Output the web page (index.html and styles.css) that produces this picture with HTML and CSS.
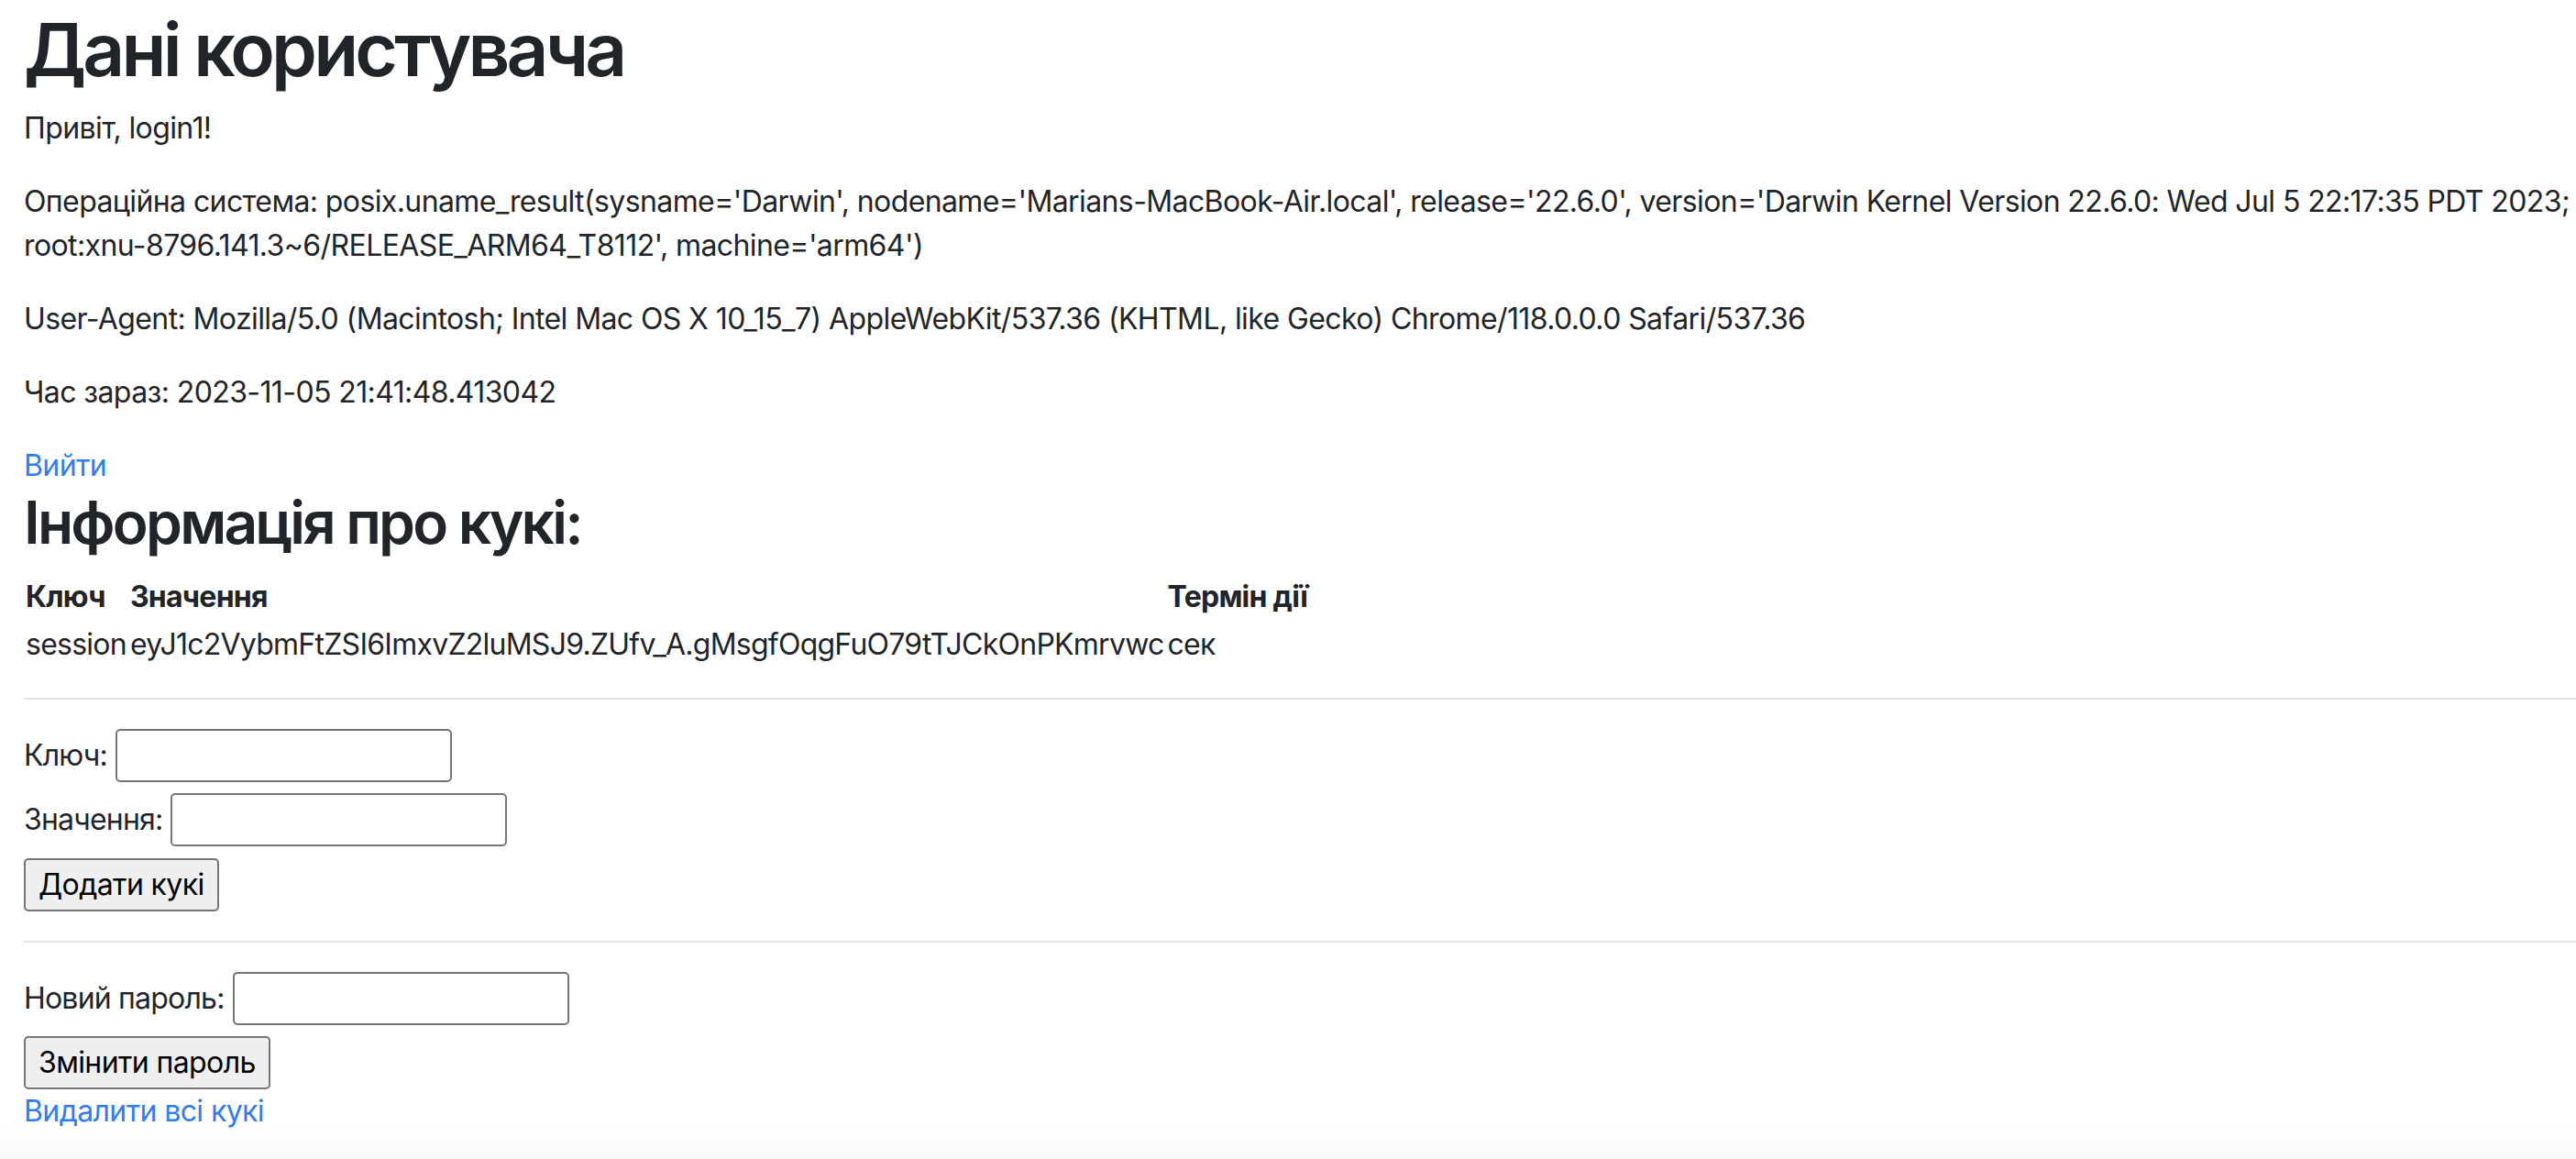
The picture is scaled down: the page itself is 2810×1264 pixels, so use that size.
FILE: index.html
```html
<!DOCTYPE html>
<html lang="uk">
<head>
<meta charset="utf-8">
<title>Дані користувача</title>
<link rel="stylesheet" href="styles.css">
</head>
<body>
<div class="page">
  <h1 class="title">Дані користувача</h1>
  <p class="text">Привіт, login1!</p>
  <p class="text">Операційна система: posix.uname_result(sysname='Darwin', nodename='Marians-MacBook-Air.local', release='22.6.0', version='Darwin Kernel Version 22.6.0: Wed Jul 5 22:17:35 PDT 2023; root:xnu-8796.141.3~6/RELEASE_ARM64_T8112', machine='arm64')</p>
  <p class="text">User-Agent: Mozilla/5.0 (Macintosh; Intel Mac OS X 10_15_7) AppleWebKit/537.36 (KHTML, like Gecko) Chrome/118.0.0.0 Safari/537.36</p>
  <p class="text">Час зараз: 2023-11-05 21:41:48.413042</p>
  <a class="link" href="#">Вийти</a>
  <h2 class="subtitle">Інформація про кукі:</h2>
  <table class="cookies">
    <thead>
      <tr><th class="cell head">Ключ</th><th class="cell head">Значення</th><th class="cell head">Термін дії</th></tr>
    </thead>
    <tbody>
      <tr><td class="cell">session</td><td class="cell">eyJ1c2VybmFtZSI6ImxvZ2luMSJ9.ZUfv_A.gMsgfOqgFuO79tTJCkOnPKmrvwc</td><td class="cell">сек</td></tr>
    </tbody>
  </table>
  <hr class="rule">
  <form class="form">
    <div class="field"><label class="label">Ключ:</label><input class="input" type="text"></div>
    <div class="field"><label class="label">Значення:</label><input class="input" type="text"></div>
    <div class="actions"><button class="button" type="button">Додати кукі</button></div>
  </form>
  <hr class="rule">
  <form class="form">
    <div class="field"><label class="label">Новий пароль:</label><input class="input" type="password"></div>
    <div class="actions"><button class="button" type="button">Змінити пароль</button></div>
  </form>
  <a class="link" href="#">Видалити всі кукі</a>
</div>
<div class="bottom-fade"></div>
</body>
</html>
```

FILE: styles.css
```css
html, body {
  margin: 0;
  padding: 0;
  background: #ffffff;
}

body {
  font-family: "Inter", "Liberation Sans", sans-serif;
  font-size: 32px;
  line-height: 48px;
  letter-spacing: -0.6px;
  color: #212529;
  min-height: 1264px;
  position: relative;
  overflow: hidden;
}

.page {
  padding: 6px 0 0 26px;
}

.title {
  margin: 0 0 14px 0;
  font-size: 80px;
  line-height: 96px;
  font-weight: 600;
  letter-spacing: -3.8px;
}

.text {
  margin: 0 0 32px 0;
}

.link {
  display: block;
  width: max-content;
  color: #2f7cf6;
  text-decoration: none;
}

.subtitle {
  margin: 0 0 16px 0;
  font-size: 64px;
  line-height: 76.8px;
  font-weight: 600;
  letter-spacing: -2.8px;
}

.cookies {
  border-collapse: collapse;
}

.cell {
  padding: 2px;
  text-align: left;
  font-weight: 400;
  white-space: nowrap;
  letter-spacing: -0.75px;
}

.cell.head {
  font-weight: 700;
}

.rule {
  height: 0;
  margin: 32px 0;
  border: 0;
  border-top: 2px solid #e5e5e5;
}

.form {
  display: flex;
  flex-direction: column;
  gap: 12.5px;
  margin: 0;
}

.field {
  display: flex;
  align-items: center;
  gap: 9px;
  height: 58px;
}

.label {
  white-space: nowrap;
  letter-spacing: -0.8px;
}

.input {
  box-sizing: border-box;
  width: 367px;
  height: 58px;
  margin: 0;
  padding: 2px 4px;
  border: 2px solid #767676;
  border-radius: 5px;
  background: #ffffff;
  font: inherit;
  letter-spacing: -0.6px;
  color: #000000;
}

.actions {
  display: flex;
}

.button {
  box-sizing: border-box;
  height: 58px;
  margin: 0;
  padding: 3px 14px;
  border: 2px solid #767676;
  border-radius: 5px;
  background: #efefef;
  font: inherit;
  letter-spacing: -0.6px;
  color: #000000;
}

.bottom-fade {
  position: absolute;
  left: 0;
  right: 0;
  bottom: 0;
  height: 40px;
  background: linear-gradient(to bottom, rgba(0, 0, 0, 0), rgba(0, 0, 0, 0.025));
  pointer-events: none;
}
```
